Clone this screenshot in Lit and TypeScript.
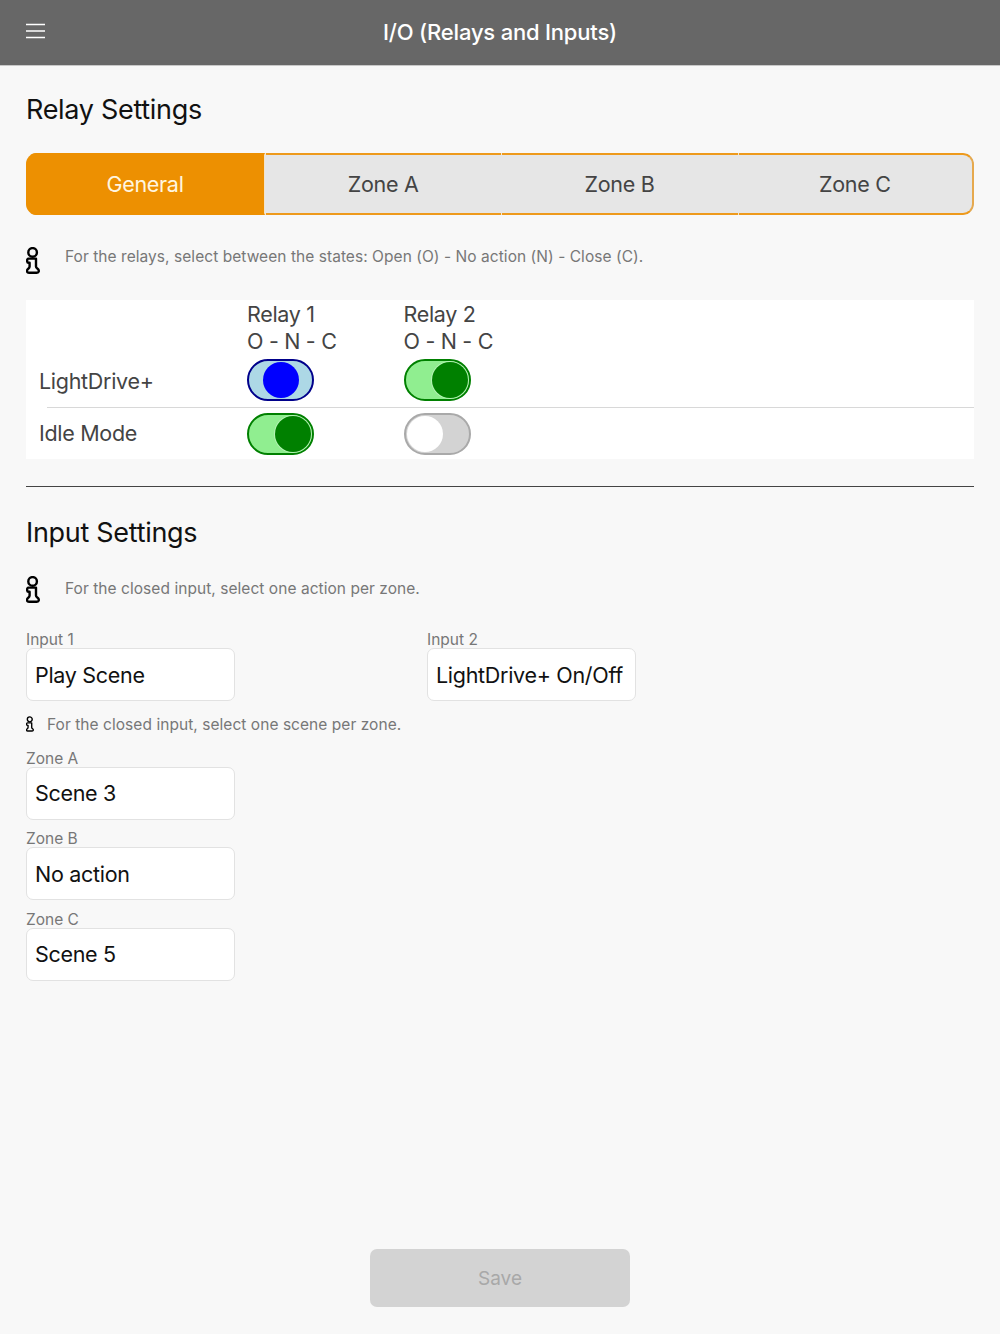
import { LitElement, html, css, svg } from 'lit'
import { customElement } from 'lit/decorators.js'

type ToggleState = 'blue' | 'green' | 'off'

const infoIcon = (size: string) => html`
  <svg class="info ${size}" viewBox="0 0 14 27" fill="none" stroke="currentColor" stroke-width="2.4" stroke-linejoin="round">
    ${svg`<ellipse cx="6.6" cy="5.4" rx="4.3" ry="4.3" />
    <path d="M2.4 11.6 H10 V19.6 C10 20.8 10.8 21.2 11.6 21.8 C13.4 23.2 13.2 25.8 10.8 25.8 H3 C0.6 25.8 0.4 23.2 2.2 21.8 C3 21.2 3.6 20.8 3.6 19.6 V15.8 H2.4 C0.7 15.8 0.7 11.6 2.4 11.6 Z" />`}
  </svg>
`

@customElement('app-root')
export class AppRoot extends LitElement {
  static styles = css`
    :host {
      display: flex;
      flex-direction: column;
      min-height: 1334px;
      background: #f8f8f8;
      font-family: Inter, 'Liberation Sans', sans-serif;
      color: #444;
    }

    .header {
      display: flex;
      align-items: center;
      justify-content: center;
      position: relative;
      height: 65px;
      background: #676767;
      border-bottom: 1px solid #c8c8c8;
      color: #fff;
      font-size: 22px;
      font-weight: 500;
      letter-spacing: -0.2px;
      flex: none;
    }

    .header .title {
      margin-bottom: 2px;
    }

    .menu {
      position: absolute;
      left: 26px;
      top: 23px;
      width: 19px;
      height: 16px;
    }

    .content {
      display: flex;
      flex-direction: column;
      flex: 1;
      padding: 0 26px 27px;
    }

    h2 {
      margin: 0;
      font-size: 27px;
      line-height: 34px;
      font-weight: 400;
      color: #111;
      letter-spacing: -0.3px;
    }

    .relay-title {
      margin-top: 27px;
    }

    .tabs {
      display: grid;
      grid-template-columns: 239px 1fr 1fr 1fr;
      height: 62px;
      margin-top: 26px;
      border-radius: 11px;
      overflow: hidden;
      background: #e6e6e6;
    }

    .tab {
      position: relative;
      display: flex;
      align-items: center;
      justify-content: center;
      box-sizing: border-box;
      border-top: 2px solid #ee9a1c;
      border-bottom: 2px solid #ee9a1c;
      font-size: 21.5px;
      letter-spacing: -0.3px;
      color: #444;
    }

    .tab + .tab::before,
    .tab + .tab::after {
      content: '';
      position: absolute;
      left: 0;
      width: 1px;
      height: 2px;
      background: #f6e6cc;
    }

    .tab + .tab::before {
      top: -2px;
    }

    .tab + .tab::after {
      bottom: -2px;
    }

    .tab.active {
      background: #ed9001;
      border-color: #ed9001;
      border-right: 1px solid #f3e3c8;
      color: #fff6e0;
    }

    .tab:last-child {
      border-right: 2px solid #e6a94e;
      border-radius: 0 11px 11px 0;
    }

    .note {
      display: flex;
      align-items: center;
      font-size: 15.5px;
      color: #777;
      letter-spacing: 0.05px;
    }

    .note .text {
      margin-left: 25px;
    }

    .note.relay {
      margin-top: 31px;
      height: 28px;
    }

    .note.relay .text {
      margin-bottom: 8px;
    }

    .note.input {
      margin-top: 25px;
      height: 28px;
    }

    .note.input .text {
      margin-bottom: 2px;
    }

    .note.small {
      margin-top: 13px;
      height: 20px;
    }

    .note.small .text {
      margin-left: 13px;
    }

    .info {
      color: #000;
      flex: none;
    }

    .info.big {
      width: 14px;
      height: 27px;
    }

    .info.tiny {
      width: 8px;
      height: 16px;
    }

    .table {
      margin-top: 26px;
      background: #fff;
      height: 159px;
      display: flex;
      flex-direction: column;
    }

    .row {
      display: grid;
      grid-template-columns: 221px 156.5px 156.5px;
      align-items: center;
    }

    .head {
      height: 59px;
      font-size: 21.5px;
      letter-spacing: -0.3px;
      line-height: 27px;
      color: #444;
      align-items: start;
    }

    .head div {
      padding-top: 1px;
    }

    .toggle-row {
      font-size: 21.5px;
      letter-spacing: -0.3px;
      color: #444;
    }

    .toggle-row.top {
      padding-bottom: 6px;
    }

    .toggle-row.top .label {
      padding-top: 2px;
    }

    .toggle-row.bottom {
      padding-top: 5px;
    }

    .toggle-row.bottom .label {
      padding-bottom: 2px;
    }

    .toggle-row .label {
      padding-left: 13px;
    }

    .rule {
      height: 1px;
      margin-left: 21px;
      background: #d8d8d8;
      flex: none;
    }

    .toggle {
      position: relative;
      width: 67px;
      height: 42px;
      box-sizing: border-box;
      border-radius: 21px;
      border: 2px solid;
    }

    .toggle .knob {
      position: absolute;
      top: 1px;
      width: 36px;
      height: 36px;
      border-radius: 50%;
    }

    .toggle.green {
      background: #90ee90;
      border-color: #008000;
    }

    .toggle.green .knob {
      right: 1px;
      background: #008000;
      box-shadow: 0 0 0 1px rgba(255, 255, 255, 0.35);
    }

    .toggle.blue {
      background: #add8e6;
      border-color: #00008b;
    }

    .toggle.blue .knob {
      left: 14px;
      background: #0000ff;
    }

    .toggle.off {
      background: #d3d3d3;
      border-color: #a9a9a9;
    }

    .toggle.off .knob {
      left: 1px;
      background: #fff;
    }

    .divider {
      height: 1px;
      margin-top: 27px;
      background: #444;
      flex: none;
    }

    .input-title {
      margin-top: 29px;
    }

    .inputs {
      display: grid;
      grid-template-columns: 401px 209px;
      margin-top: 27px;
    }

    .field {
      display: flex;
      flex-direction: column;
      width: 209px;
    }

    .zones {
      display: flex;
      flex-direction: column;
      margin-top: 14.8px;
      gap: 9.5px;
    }

    .field label {
      padding-top: 2px;
      font-size: 15.5px;
      line-height: 16px;
      color: #777;
    }

    .box {
      display: flex;
      align-items: center;
      box-sizing: border-box;
      height: 53px;
      padding-left: 8px;
      background: #fff;
      border: 1px solid #e2e2e2;
      border-radius: 7px;
      font-size: 21.5px;
      color: #111;
      white-space: nowrap;
      letter-spacing: -0.3px;
    }

    .save-wrap {
      display: flex;
      justify-content: center;
      margin-top: auto;
    }

    .save {
      display: flex;
      align-items: center;
      justify-content: center;
      width: 260px;
      height: 58px;
      background: #d3d3d3;
      border-radius: 7px;
      font-size: 19px;
      color: #a8a8a8;
    }
  `

  toggle(state: ToggleState) {
    return html`<div class="toggle ${state}"><div class="knob"></div></div>`
  }

  field(label: string, value: string) {
    return html`
      <div class="field">
        <label>${label}</label>
        <div class="box">${value}</div>
      </div>
    `
  }

  render() {
    return html`
      <div class="header">
        <svg class="menu" viewBox="0 0 19 16" stroke="#fff" stroke-width="1.4" fill="none">
          <path d="M0 1.5H19M0 8H19M0 14.5H19" />
        </svg>
        <span class="title">I/O (Relays and Inputs)</span>
      </div>
      <div class="content">
        <h2 class="relay-title">Relay Settings</h2>
        <div class="tabs">
          <div class="tab active">General</div>
          <div class="tab">Zone A</div>
          <div class="tab">Zone B</div>
          <div class="tab">Zone C</div>
        </div>
        <div class="note relay">
          ${infoIcon('big')}
          <span class="text">For the relays, select between the states: Open (O) - No action (N) - Close (C).</span>
        </div>
        <div class="table">
          <div class="row head">
            <span></span>
            <div>Relay 1<br />O - N - C</div>
            <div>Relay 2<br />O - N - C</div>
          </div>
          <div class="row toggle-row top">
            <span class="label">LightDrive+</span>
            ${this.toggle('blue')}
            ${this.toggle('green')}
          </div>
          <div class="rule"></div>
          <div class="row toggle-row bottom">
            <span class="label">Idle Mode</span>
            ${this.toggle('green')}
            ${this.toggle('off')}
          </div>
        </div>
        <div class="divider"></div>
        <h2 class="input-title">Input Settings</h2>
        <div class="note input">
          ${infoIcon('big')}
          <span class="text">For the closed input, select one action per zone.</span>
        </div>
        <div class="inputs">
          ${this.field('Input 1', 'Play Scene')}
          ${this.field('Input 2', 'LightDrive+ On/Off')}
        </div>
        <div class="note small">
          ${infoIcon('tiny')}
          <span class="text">For the closed input, select one scene per zone.</span>
        </div>
        <div class="zones">
          ${this.field('Zone A', 'Scene 3')}
          ${this.field('Zone B', 'No action')}
          ${this.field('Zone C', 'Scene 5')}
        </div>
        <div class="save-wrap">
          <div class="save">Save</div>
        </div>
      </div>
    `
  }
}
